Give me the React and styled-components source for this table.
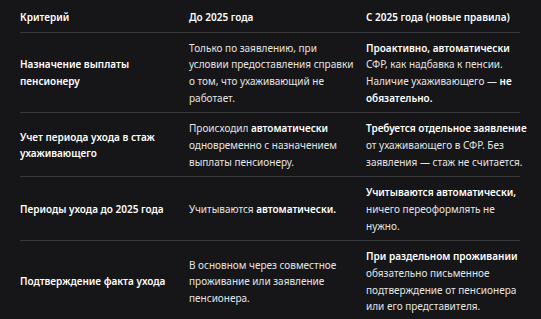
import React from 'react';
import styled, { createGlobalStyle } from 'styled-components';

const GlobalStyle = createGlobalStyle`
  html, body {
    margin: 0;
    padding: 0;
    background: #161618;
  }
  body {
    font-family: "Noto Sans", "Open Sans", sans-serif;
    color: #e6e6e6;
  }
`;

const Page = styled.div`
  width: 541px;
  height: 319px;
  overflow: hidden;
  background: #161618;
  padding: 0 21px 0 20px;
  box-sizing: border-box;
`;

const Row = styled.div`
  display: grid;
  grid-template-columns: 169px 177px 1fr;
  align-items: center;
  border-bottom: 1px solid ${({ $last }) => ($last ? 'transparent' : '#3a3a3c')};
  padding: ${({ $head }) => ($head ? '9px 0 6px' : '7px 0 6px')};
`;

const Cell = styled.div`
  font-size: 10px;
  line-height: 16.67px;
  font-weight: ${({ $bold }) => ($bold ? 600 : 400)};
  color: ${({ $bold }) => ($bold ? '#ffffff' : '#e4e4e4')};
  white-space: nowrap;
  padding-right: 8px;
`;

const B = styled.strong`
  font-weight: 600;
  color: #ffffff;
`;

const rows = [
  {
    crit: <>Назначение выплаты<br />пенсионеру</>,
    before: <>Только по заявлению, при<br />условии предоставления справки<br />о том, что ухаживающий не<br />работает.</>,
    after: <><B>Проактивно, автоматически</B><br />СФР, как надбавка к пенсии.<br />Наличие ухаживающего — <B>не</B><br /><B>обязательно.</B></>,
  },
  {
    crit: <>Учет периода ухода в стаж<br />ухаживающего</>,
    before: <>Происходил <B>автоматически</B><br />одновременно с назначением<br />выплаты пенсионеру.</>,
    after: <><B>Требуется отдельное заявление</B><br />от ухаживающего в СФР. Без<br />заявления — стаж не считается.</>,
  },
  {
    crit: <>Периоды ухода до 2025 года</>,
    before: <>Учитываются <B>автоматически.</B></>,
    after: <><B>Учитываются автоматически,</B><br />ничего переоформлять не<br />нужно.</>,
  },
  {
    crit: <>Подтверждение факта ухода</>,
    before: <>В основном через совместное<br />проживание или заявление<br />пенсионера.</>,
    after: <><B>При раздельном проживании</B><br />обязательно письменное<br />подтверждение от пенсионера<br />или его представителя.</>,
  },
];

const App = () => (
  <>
    <GlobalStyle />
    <Page>
      <Row $head>
        <Cell $bold>Критерий</Cell>
        <Cell $bold>До 2025 года</Cell>
        <Cell $bold>С 2025 года (новые правила)</Cell>
      </Row>
      {rows.map((r, i) => (
        <Row key={i} $last={i === rows.length - 1}>
          <Cell $bold>{r.crit}</Cell>
          <Cell>{r.before}</Cell>
          <Cell>{r.after}</Cell>
        </Row>
      ))}
    </Page>
  </>
);

export default App;
